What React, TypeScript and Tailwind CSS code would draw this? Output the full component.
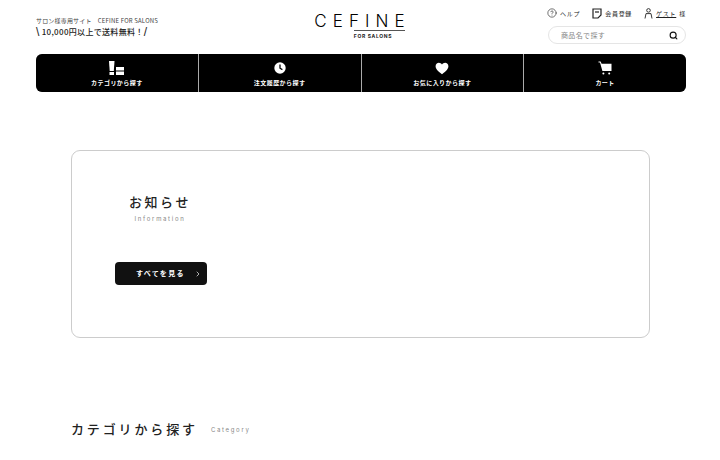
import React from 'react';
import { Search, ChevronRight, CircleHelp } from 'lucide-react';

const jp = "font-['Noto_Sans_CJK_JP','Noto_Sans',sans-serif]";

const CategoryIcon = () => (
  <svg width="16" height="15" viewBox="0 0 16 15" fill="white">
    <path d="M0 0H5.5L4.8 10H.7Z" />
    <rect x="0.5" y="11" width="4.5" height="3" />
    <rect x="7" y="6" width="8" height="3.5" />
    <rect x="7" y="10.5" width="8" height="3.5" />
  </svg>
);

const ClockIcon = () => (
  <svg width="14" height="14" viewBox="0 0 14 14">
    <circle cx="7" cy="7" r="5.7" fill="white" />
    <path d="M7 3.5V7.2L9.4 8.6" stroke="black" strokeWidth="1.3" fill="none" />
  </svg>
);

const HeartIcon = () => (
  <svg width="14" height="13" viewBox="0 0 14 13" fill="white">
    <path d="M7 12.2C2.6 8.8.6 6.8.6 4.2.6 2.2 2.1.8 3.9.8 5.2.8 6.3 1.5 7 2.6 7.7 1.5 8.8.8 10.1.8c1.8 0 3.3 1.4 3.3 3.4 0 2.6-2 4.6-6.4 8z" />
  </svg>
);

const CartIcon = () => (
  <svg width="14" height="14" viewBox="0 0 14 14" fill="white">
    <path d="M0.5 0.5H2.6L3.6 2.8H13.5V10H4.4L2 1.5H0.5Z" />
    <circle cx="5.4" cy="12.4" r="1" />
    <circle cx="11.2" cy="12.4" r="1" />
  </svg>
);

const DocIcon = () => (
  <svg width="10" height="11" viewBox="0 0 10 11" fill="none" stroke="#222" strokeWidth="1.2">
    <path d="M1 1H9V7L6 10H2.5L1 10Z" />
    <path d="M3 4H7" />
  </svg>
);

const PersonIcon = () => (
  <svg width="9" height="11" viewBox="0 0 9 11" fill="none" stroke="#222" strokeWidth="0.9">
    <circle cx="4.5" cy="2.4" r="1.8" />
    <path d="M1 10.5 2 5.6H7L8 10.5" />
  </svg>
);

const navItems = [
  { label: 'カテゴリから探す', icon: <CategoryIcon /> },
  { label: '注文履歴から探す', icon: <ClockIcon /> },
  { label: 'お気に入りから探す', icon: <HeartIcon /> },
  { label: 'カート', icon: <CartIcon /> },
];

export default function App() {
  return (
    <div className={`w-[720px] h-[460px] overflow-hidden bg-white text-[#222] ${jp}`}>
      <header className="flex justify-between pl-9 pr-[34px] h-[54px]">
        <div className="w-[137px] pt-[16px]">
          <p className="text-[6px] leading-[9px] tracking-[0.03em] text-[#444] whitespace-nowrap">サロン様専用サイト　CEFINE FOR SALONS</p>
          <p className="flex items-center text-[8px] leading-[12px] mt-[1px] tracking-[0.04em] font-medium whitespace-nowrap">
            <span className="text-[12px] font-['Liberation_Sans',sans-serif] mr-[2px]">\</span>
            10,000円以上で送料無料！
            <span className="text-[12px] font-['Liberation_Sans',sans-serif]">/</span>
          </p>
        </div>

        <div className="flex flex-col items-end pt-[13px] mr-[2px]">
          <div className="text-[17px] leading-[16px] tracking-[0.36em] -mr-[6px] font-['Inter',sans-serif] font-light text-black">CEFINE</div>
          <div className="w-[51px] mt-[1px] border-t border-[#555]" />
          <div className="w-[51px] text-[5px] leading-[8px] mt-[1px] tracking-[0.13em] whitespace-nowrap font-bold font-['Inter',sans-serif]">FOR SALONS</div>
        </div>

        <div className="w-[138px] pt-[7px]">
          <div className="flex items-center justify-end gap-[12px] text-[6px] h-[12px] tracking-[0.12em] whitespace-nowrap">
            <span className="flex items-center gap-[3px]"><CircleHelp size={10} strokeWidth={1.5} className="text-[#222]" />ヘルプ</span>
            <span className="flex items-center gap-[3px]"><DocIcon />会員登録</span>
            <span className="flex items-center gap-[3px]"><PersonIcon /><span className="underline">ゲスト</span> 様</span>
          </div>
          <div className="flex items-center justify-between mt-[7px] h-[18px] border border-[#e5e5e5] rounded-full pl-[12px] pr-[7px]">
            <span className="text-[7px] tracking-[0.05em] text-[#888]">商品名で探す</span>
            <Search size={9} strokeWidth={3} className="text-[#111]" />
          </div>
        </div>
      </header>

      <nav className="ml-9 mr-[34px] h-[38px] grid grid-cols-4 gap-x-[1px] bg-[#aaa] rounded-[6px] overflow-hidden">
        {navItems.map(item => (
          <div key={item.label} className="bg-black flex flex-col items-center pt-[6px] text-white">
            <div className="h-[16px] flex items-center">{item.icon}</div>
            <span className="text-[6px] leading-[9px] mt-[2px] font-bold tracking-[0.08em]">{item.label}</span>
          </div>
        ))}
      </nav>

      <section className="ml-[71px] mr-[70px] mt-[58px] h-[188px] border border-[#ccc] rounded-[9px] pt-[42px] pl-[43px]">
        <div className="w-[88px] flex flex-col items-center ml-[1px]">
          <h2 className="text-[13px] leading-[18px] font-medium tracking-[0.2em]">お知らせ</h2>
          <p className="text-[6px] leading-[8px] mt-[4px] tracking-[0.28em] text-[#888] font-['Inter',sans-serif]">Information</p>
        </div>
        <button className="mt-[39px] w-[92px] h-[23px] bg-[#111] rounded-[4px] text-white text-[7px] font-bold tracking-[0.18em] flex items-center justify-between pl-[21px] pr-[5px]">
          すべてを見る
          <ChevronRight size={8} strokeWidth={2} />
        </button>
      </section>

      <div className="mx-[71px] mt-[82px] flex items-center">
        <h2 className="text-[13px] leading-[18px] font-medium tracking-[0.22em]">カテゴリから探す</h2>
        <span className="ml-[13px] text-[6px] tracking-[0.28em] text-[#888] font-['Inter',sans-serif]">Category</span>
      </div>
    </div>
  );
}
